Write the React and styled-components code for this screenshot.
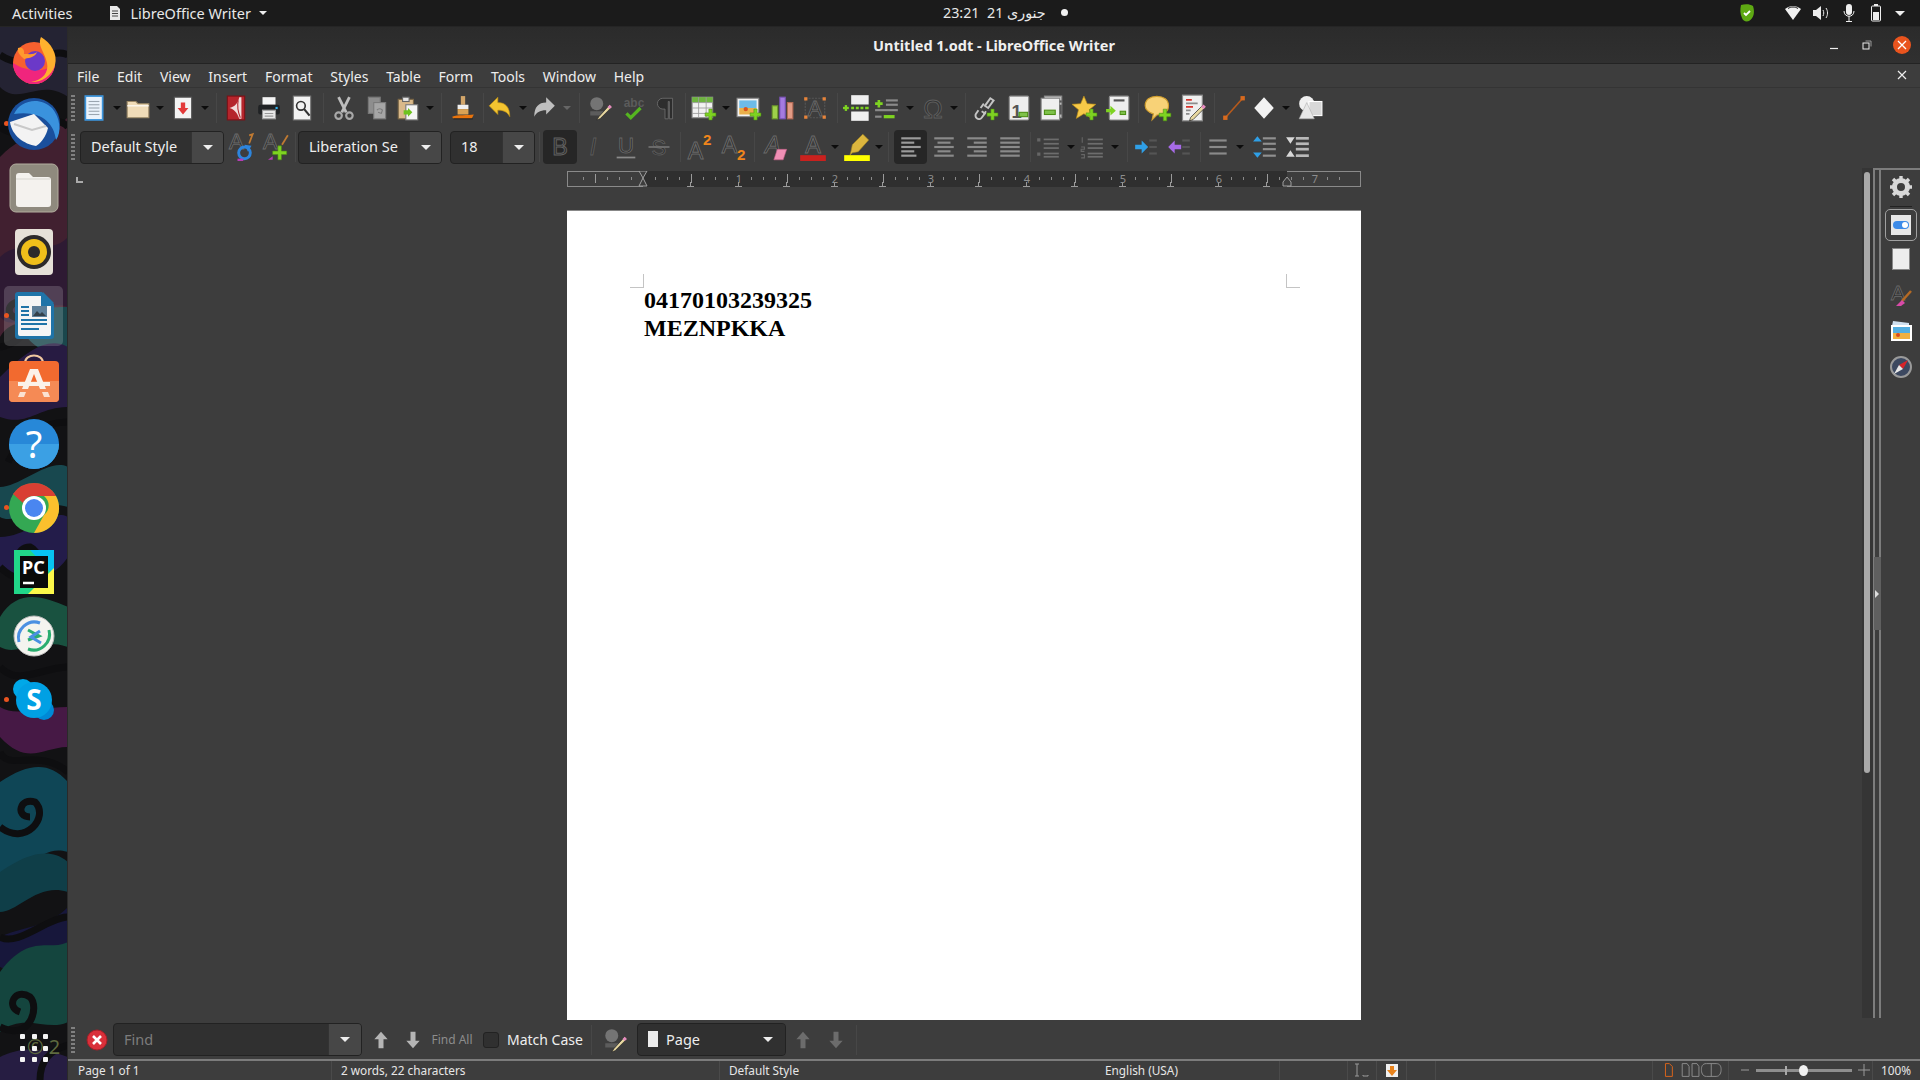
import React from "react";
import styled, { createGlobalStyle } from "styled-components";

const UI_FONT = `"Noto Sans", "DejaVu Sans", sans-serif`;

const GlobalStyle = createGlobalStyle`
  html, body {
    margin: 0;
    padding: 0;
    background: #3d3d3d;
    overflow: hidden;
  }
  * { box-sizing: border-box; }
`;

const Desktop = styled.div`
  width: 1920px;
  height: 1080px;
  display: flex;
  flex-direction: column;
  font-family: ${UI_FONT};
  font-size: 14px;
  color: #f0f0f0;
  overflow: hidden;
`;

/* ---------- gnome top bar ---------- */

const TopBar = styled.div`
  height: 27px;
  flex: none;
  background: #1b1b1b;
  border-bottom: 1px solid #252525;
  position: relative;
  display: flex;
  align-items: center;
  padding-left: 12px;
  font-size: 14.5px;
  color: #e8e8e8;
`;

const AppMenu = styled.div`
  display: flex;
  align-items: center;
  gap: 8px;
  margin-left: 36px;
`;

const DownCaret = styled.span`
  display: inline-block;
  width: 0;
  height: 0;
  border-left: ${(p) => p.$size || 4}px solid transparent;
  border-right: ${(p) => p.$size || 4}px solid transparent;
  border-top: ${(p) => p.$size || 4}px solid ${(p) => p.$color || "#eee"};
`;

const Clock = styled.div`
  position: absolute;
  left: 943px;
  top: 3px;
  display: flex;
  align-items: center;
  gap: 15px;
  font-size: 14.3px;
  white-space: pre;
`;

const Dot = styled.span`
  width: 7px;
  height: 7px;
  border-radius: 50%;
  background: #f2f2f2;
`;

const TrayGroup = styled.div`
  margin-left: auto;
  display: flex;
  align-items: center;
`;

const TraySlot = styled.span`
  width: ${(p) => p.$w}px;
  display: flex;
  justify-content: center;
`;

/* ---------- dock ---------- */

const Body = styled.div`
  flex: 1;
  display: flex;
  min-height: 0;
`;

const Dock = styled.div`
  width: 68px;
  flex: none;
  position: relative;
  background: #121214;
  border-right: 1px solid #2a2a2a;
  overflow: hidden;
  display: flex;
  flex-direction: column;
  padding-top: 1px;
`;

const Wallpaper = styled.svg`
  position: absolute;
  inset: 0;
`;

const DockItem = styled.div`
  position: relative;
  height: 64px;
  display: flex;
  align-items: center;
  justify-content: center;
`;

const DockActive = styled.div`
  position: absolute;
  left: 4px;
  right: 4px;
  top: 2px;
  bottom: 2px;
  border-radius: 5px;
  background: rgba(255, 255, 255, 0.17);
`;

const RunDot = styled.span`
  position: absolute;
  left: 4px;
  top: 50%;
  margin-top: -3px;
  width: 5px;
  height: 5px;
  border-radius: 50%;
  background: #e95420;
`;

const DockIcon = styled.svg`
  position: relative;
  display: block;
`;

const AppsGrid = styled.div`
  position: absolute;
  left: 20px;
  bottom: 18px;
  display: grid;
  grid-template-columns: repeat(3, 5px);
  gap: 6.5px;
`;

const AppsDot = styled.span`
  width: 5px;
  height: 5px;
  border-radius: 1px;
  background: #f4f4f4;
`;

/* ---------- libreoffice window ---------- */

const Win = styled.div`
  flex: 1;
  min-width: 0;
  display: flex;
  flex-direction: column;
  background: #3d3d3d;
`;

const TitleBar = styled.div`
  height: 37px;
  flex: none;
  background: linear-gradient(#2b2b2b, #303030);
  border-bottom: 1px solid #232323;
  position: relative;
  display: flex;
  align-items: center;
  justify-content: center;
  font-weight: 700;
  font-size: 14.5px;
  color: #f0f0f0;
`;

const WinControls = styled.div`
  position: absolute;
  right: 0;
  top: 0;
  height: 100%;
  display: flex;
  align-items: center;
`;

const WinButton = styled.span`
  width: ${(p) => p.$w}px;
  display: flex;
  justify-content: center;
`;

const CloseDisc = styled.span`
  width: 18px;
  height: 18px;
  border-radius: 50%;
  background: #e9541e;
  display: flex;
  align-items: center;
  justify-content: center;
`;

const MenuBar = styled.div`
  height: 24px;
  flex: none;
  display: flex;
  align-items: center;
  padding-top: 1px;
  border-bottom: 1px solid #343434;
  position: relative;
  color: #ededed;
`;

const MenuItem = styled.span`
  padding: 0 8.9px;
  font-size: 14px;
`;

const DocClose = styled.span`
  position: absolute;
  right: 13px;
  top: 6px;
  display: flex;
`;

const ToolRow = styled.div`
  height: ${(p) => p.$h}px;
  flex: none;
  display: flex;
  align-items: center;
  padding-left: 3px;
  padding-top: ${(p) => p.$top || 0}px;
`;

const Grip = styled.span`
  width: 4px;
  height: ${(p) => p.$h || 26}px;
  margin-right: ${(p) => p.$mr || 3}px;
  background: repeating-linear-gradient(#808080 0 2px, transparent 2px 4px);
  flex: none;
`;

const Tool = styled.span`
  width: ${(p) => p.$w}px;
  height: ${(p) => (p.$active ? 34 : 30)}px;
  flex: none;
  display: flex;
  align-items: center;
  justify-content: center;
  border-radius: 4px;
  background: ${(p) => (p.$active ? "#262626" : "transparent")};
`;

const Sep = styled.span`
  width: ${(p) => p.$w}px;
  height: 30px;
  flex: none;
  display: flex;
  justify-content: center;
  &::before {
    content: "";
    width: 1px;
    background: #474747;
  }
`;

const Combo = styled.div`
  width: ${(p) => p.$w}px;
  height: ${(p) => p.$h || 33}px;
  flex: none;
  display: flex;
  border: 1px solid #222;
  border-radius: 4px;
  background: #303030;
  overflow: hidden;
  font-size: 14.5px;
`;

const ComboText = styled.span`
  flex: 1;
  min-width: 0;
  padding-left: ${(p) => p.$pad || 10}px;
  padding-bottom: 2px;
  display: flex;
  align-items: center;
  gap: 8px;
  color: ${(p) => p.$color || "#eeeeee"};
  white-space: nowrap;
  overflow: hidden;
`;

const ComboArrow = styled.span`
  width: ${(p) => p.$w || 32}px;
  flex: none;
  background: ${(p) => (p.$flat ? "#303030" : "#474747")};
  border-left: ${(p) => (p.$flat ? "0" : "1px solid #333")};
  display: flex;
  align-items: center;
  justify-content: center;
`;

const Spacer = styled.span`
  width: ${(p) => p.$w}px;
  flex: none;
`;

/* ---------- document area ---------- */

const Main = styled.div`
  flex: 1;
  min-height: 0;
  display: flex;
`;

const Workspace = styled.div`
  flex: 1;
  min-width: 0;
  display: flex;
  flex-direction: column;
  position: relative;
  padding: 3px 0 0 499px;
  overflow: hidden;
`;

const RulerCorner = styled.span`
  position: absolute;
  left: 8px;
  top: 9px;
  width: 7px;
  height: 6px;
  border-left: 2px solid #aaa;
  border-bottom: 2px solid #aaa;
`;

const RulerSvg = styled.svg`
  display: block;
  flex: none;
`;

const Page = styled.div`
  width: 794px;
  flex: 1;
  margin-top: 23px;
  background: #fff;
  border-top: 1px solid #888;
  position: relative;
  padding: 75px 74px 0 77px;
  font-family: "Liberation Serif", "Times New Roman", serif;
  font-weight: 700;
  font-size: 24px;
  line-height: 28px;
  color: #000;
`;

const MarginMark = styled.span`
  position: absolute;
  top: 63px;
  ${(p) => (p.$right ? "right: 61px;" : "left: 63px;")}
  width: 14px;
  height: 14px;
  border-bottom: 1px solid #c4c4c4;
  ${(p) => (p.$right ? "border-left: 1px solid #c4c4c4;" : "border-right: 1px solid #c4c4c4;")}
`;

const ScrollTrack = styled.div`
  width: 11px;
  flex: none;
  background: #353535;
  padding: 4px 2px 0 2px;
  margin-bottom: 2px;
`;

const ScrollThumb = styled.div`
  width: 6px;
  height: 601px;
  border-radius: 3px;
  background: #a9a9a9;
`;

const SidebarSash = styled.div`
  width: 6px;
  flex: none;
  border-left: 2px solid #7d7d7d;
  border-top: 2px solid #7d7d7d;
  position: relative;
  margin-bottom: 2px;
`;

const SashHandle = styled.span`
  position: absolute;
  left: -1px;
  top: 387px;
  width: 7px;
  height: 73px;
  background: #5f5f5f;
  display: flex;
  align-items: center;
  justify-content: center;
`;

const Sidebar = styled.div`
  width: 41px;
  flex: none;
  border-left: 2px solid #7d7d7d;
  border-top: 2px solid #7d7d7d;
  margin-bottom: 2px;
  display: flex;
  flex-direction: column;
  align-items: center;
`;

const SideTool = styled.span`
  width: 32px;
  height: ${(p) => p.$h || 36}px;
  flex: none;
  display: flex;
  align-items: center;
  justify-content: center;
  border-radius: 5px;
  border: 1px solid ${(p) => (p.$active ? "#a0a0a0" : "transparent")};
`;

const SideDivider = styled.span`
  width: 22px;
  height: 1px;
  background: #222;
  margin: 2px 0;
`;

/* ---------- find bar + status bar ---------- */

const FindLabel = styled.span`
  width: ${(p) => p.$w}px;
  flex: none;
  text-align: center;
  font-size: 12px;
  color: #8c8c8c;
`;

const CheckBox = styled.span`
  width: 16px;
  height: 16px;
  flex: none;
  margin: 0 8px 0 5px;
  background: #303030;
  border: 1px solid #222;
  border-radius: 3px;
`;

const MatchCase = styled.span`
  width: 84px;
  flex: none;
  padding-bottom: 1px;
  white-space: nowrap;
  color: #eee;
`;

const StatusBar = styled.div`
  height: 21px;
  flex: none;
  border-top: 2px solid #7c7c7c;
  display: flex;
  align-items: center;
  font-size: 11.8px;
  color: #e6e6e6;
`;

const StatusCell = styled.div`
  width: ${(p) => p.$w}px;
  flex: none;
  height: 100%;
  padding-left: ${(p) => (p.$center ? 0 : p.$pad ?? 9)}px;
  padding-bottom: 1px;
  display: flex;
  align-items: center;
  justify-content: ${(p) => (p.$center ? "center" : "flex-start")};
  gap: 4px;
  white-space: nowrap;
  border-left: 1px solid ${(p) => (p.$plain ? "transparent" : "#4a4a4a")};
`;

const ZoomTrack = styled.span`
  width: 96px;
  height: 3px;
  background: #8e8e8e;
  position: relative;
  display: block;
  margin: 0 2px;
`;

const ZoomMark = styled.span`
  position: absolute;
  left: 29px;
  top: -3px;
  width: 2px;
  height: 9px;
  background: #a8a8a8;
`;

const ZoomThumb = styled.span`
  position: absolute;
  left: 43px;
  top: -4px;
  width: 9px;
  height: 11px;
  border-radius: 50%;
  background: #f0f0f0;
`;

/* ---------- drawings ---------- */

const Ico = ({ s = 24, children }) => (
  <svg width={s} height={s} viewBox="0 0 24 24" style={{ display: "block", overflow: "visible" }}>
    {children}
  </svg>
);

const Plus = ({ x = 16, y = 16, r = 5 }) => (
  <path
    d={`M${x - r} ${y - 1.5}h${r - 1.5}v-${r - 1.5}h3v${r - 1.5}h${r - 1.5}v3h-${r - 1.5}v${r - 1.5}h-3v-${r - 1.5}h-${r - 1.5}z`}
    fill="#7ed321"
    stroke="#4d8f14"
    strokeWidth="0.5"
  />
);

const Letter = ({ x = 9, y = 18, size = 20, fill = "#2c2c2c", stroke = "#6a6a6a", weight = 400, style, ch = "A" }) => (
  <text
    x={x}
    y={y}
    textAnchor="middle"
    fontFamily="Liberation Sans, sans-serif"
    fontSize={size}
    fontWeight={weight}
    fontStyle={style}
    fill={fill}
    stroke={stroke}
    strokeWidth="0.8"
  >
    {ch}
  </text>
);

const Lines = ({ x = 3, w = 18, ys, c = "#888", sw = 2 }) => (
  <g stroke={c} strokeWidth={sw}>
    {ys.map((y, i) => (
      <path key={i} d={`M${x} ${y}h${Array.isArray(w) ? w[i] : w}`} />
    ))}
  </g>
);

const Icons = {
  newDoc: (
    <Ico s={26}>
      <rect x="4" y="1" width="16" height="22" fill="#eaf2fb" stroke="#3d95dc" strokeWidth="1.6" />
      <Lines x={7} w={10} ys={[6, 9, 12, 15, 18]} c="#9aa5b0" sw={1} />
    </Ico>
  ),
  open: (
    <Ico s={26}>
      <path d="M2 6h8l2 2h10v13H2z" fill="#f0dcb8" stroke="#9d8a68" />
      <path d="M2 10h20" stroke="#fff" />
    </Ico>
  ),
  save: (
    <Ico s={26}>
      <rect x="4" y="2" width="16" height="20" fill="#f4f4f4" stroke="#555" />
      <path d="M10 7h4v5h3l-5 6-5-6h3z" fill="#e33a3a" />
    </Ico>
  ),
  pdf: (
    <Ico s={26}>
      <rect x="4" y="1" width="16" height="22" fill="#b5252c" stroke="#7c1116" />
      <path d="M15 2c-1 6-5 9-9 10 4 1 7 4 9 10h2V2z" fill="#f2dcdc" />
      <path d="M14 5c-1 5 0 11 2 16" stroke="#b5252c" fill="none" />
    </Ico>
  ),
  print: (
    <Ico s={26}>
      <rect x="6" y="2" width="12" height="7" fill="#f4f4f4" />
      <rect x="2" y="9" width="20" height="9" rx="2" fill="#202224" />
      <rect x="18" y="11" width="2" height="2" fill="#35b4f0" />
      <rect x="6" y="14" width="12" height="8" fill="#e9e9e9" stroke="#999" />
      <path d="M8 17h8M8 19.500h8" stroke="#999" />
    </Ico>
  ),
  preview: (
    <Ico s={26}>
      <rect x="4" y="1" width="16" height="22" fill="#f2f2f2" stroke="#777" />
      <circle cx="11" cy="10" r="4" fill="none" stroke="#333" strokeWidth="1.5" />
      <path d="M14 13l5 6" stroke="#333" strokeWidth="2" />
    </Ico>
  ),
  cut: (
    <Ico s={26}>
      <path d="M7 2l7 14M17 2l-7 14" stroke="#bdbdbd" strokeWidth="2.6" />
      <circle cx="7" cy="19" r="3" fill="none" stroke="#a8a8a8" strokeWidth="2" />
      <circle cx="17" cy="19" r="3" fill="none" stroke="#a8a8a8" strokeWidth="2" />
    </Ico>
  ),
  copy: (
    <Ico s={26}>
      <rect x="4" y="2" width="11" height="15" fill="#8e8e8e" stroke="#777" />
      <rect x="9" y="7" width="11" height="15" fill="#a5a5a5" stroke="#7a7a7a" />
      <path d="M12 14a3 3 0 0 1 5 0l-1 3-3-1" fill="none" stroke="#7a7a7a" />
    </Ico>
  ),
  paste: (
    <Ico s={26}>
      <rect x="3" y="4" width="14" height="18" fill="#d9b98a" stroke="#7a6645" />
      <rect x="7" y="2" width="6" height="4" fill="#e5e5e5" stroke="#666" />
      <rect x="10" y="9" width="11" height="14" fill="#f5f5f5" stroke="#777" />
      <path d="M8 14h4v-2l4 4-4 4v-2H8z" fill="#6ec31e" />
    </Ico>
  ),
  clone: (
    <Ico s={26}>
      <rect x="10" y="1" width="4" height="8" fill="#d3a66a" />
      <rect x="7" y="9" width="10" height="4" fill="#f0f0f0" />
      <path d="M7 13h10v5H7z" fill="#d9a255" />
      <path d="M2 20c5-2 14-1 20-2l-2 4H3z" fill="#e8730c" />
      <path d="M3 22h18" stroke="#222" strokeWidth="1" />
    </Ico>
  ),
  undo: (
    <Ico s={26}>
      <path d="M2 10l8-8v5c7 0 11 4 11 13-2-4-5-6-11-6v4z" fill="#f4c430" stroke="#b98d15" strokeWidth="0.6" />
    </Ico>
  ),
  redo: (
    <Ico s={26}>
      <path d="M22 10l-8-8v5C7 7 3 11 3 20c2-4 5-6 11-6v4z" fill="#bfbfbf" />
    </Ico>
  ),
  spell: (
    <Ico s={26}>
      <circle cx="9" cy="8" r="6" fill="#747474" />
      <path d="M3 15h12l2 2-4 2H3z" fill="#5c5c5c" />
      <path d="M21 9L11 20l-2 3 3-1L23 11z" fill="#e8d8a0" stroke="#222" strokeWidth="0.6" />
      <path d="M21 9l2 2-2 2-2-2z" fill="#e58ac0" />
    </Ico>
  ),
  autoSpell: (
    <Ico s={26}>
      <text x="12" y="11" textAnchor="middle" fontFamily="Liberation Sans, sans-serif" fontSize="11" fontWeight="700" fill="#5b5b5b">
        abc
      </text>
      <path d="M5 17l4 4 9-9" fill="none" stroke="#55b520" strokeWidth="3" />
    </Ico>
  ),
  pilcrow: (
    <Ico s={26}>
      <path d="M19 3H10a5 5 0 0 0 0 10h2v9h3V6h1v16h3z" fill="#2d2d2d" stroke="#6d6d6d" strokeWidth="0.8" />
    </Ico>
  ),
  table: (
    <Ico s={26}>
      <rect x="1" y="2" width="19" height="19" fill="#f2f2f2" stroke="#8a8a8a" />
      <rect x="1" y="2" width="19" height="5" fill="#6db33f" />
      <path d="M7 2v19M14 2v19M1 7h19M1 12h19M1 17h19" stroke="#9c9c9c" strokeWidth="0.8" />
      <Plus x={18} y={18} />
    </Ico>
  ),
  image: (
    <Ico s={26}>
      <rect x="1" y="3" width="20" height="17" fill="#f2f2f2" stroke="#888" />
      <rect x="3" y="5" width="16" height="7" fill="#6dbbe8" />
      <rect x="3" y="12" width="16" height="6" fill="#eab04a" />
      <circle cx="9" cy="13" r="2" fill="#d8541e" />
      <Plus x={18} y={18} />
    </Ico>
  ),
  chart: (
    <Ico s={26}>
      <rect x="3" y="10" width="5" height="12" fill="#9ed04a" stroke="#6d9c2b" />
      <rect x="10" y="2" width="5" height="20" fill="#a57be0" stroke="#7a52b8" />
      <rect x="17" y="7" width="5" height="15" fill="#e29b85" stroke="#b46a55" />
    </Ico>
  ),
  textBox: (
    <Ico s={26}>
      <rect x="3" y="3" width="18" height="18" fill="none" stroke="#555" strokeDasharray="2 1" />
      <Letter x={12} y={19} size={20} />
      <path d="M2 2h3v3H2zM19 2h3v3h-3zM2 19h3v3H2zM19 19h3v3h-3z" fill="#e8843a" />
    </Ico>
  ),
  pageBreak: (
    <Ico s={28}>
      <rect x="7" y="1" width="15" height="8" fill="#efefef" />
      <rect x="7" y="15" width="15" height="8" fill="#efefef" />
      <path d="M0 12h5" stroke="#7ed321" strokeWidth="2" />
      <path d="M2.500 9.500v5" stroke="#7ed321" strokeWidth="2" />
      <path d="M7 12h2.500M11 12h2.500M15 12h2.500M19 12h3" stroke="#7ed321" strokeWidth="2" />
    </Ico>
  ),
  field: (
    <Ico s={26}>
      <path d="M1 8h7M4.500 4.500v7" stroke="#7ed321" strokeWidth="2.400" />
      <Lines x={11} w={11} ys={[5, 9]} c="#8a8a8a" />
      <Lines x={1} w={21} ys={[14]} c="#8a8a8a" />
      <path d="M1 20h6" stroke="#8a8a8a" strokeWidth="2" />
      <path d="M9 20h10" stroke="#7ed321" strokeWidth="3" />
    </Ico>
  ),
  omega: (
    <Ico s={26}>
      <text x="12" y="21" textAnchor="middle" fontFamily="Liberation Sans, sans-serif" fontSize="24" fill="#333" stroke="#5f5f5f" strokeWidth="0.8">
        Ω
      </text>
    </Ico>
  ),
  link: (
    <Ico s={26}>
      <path d="M16 3l-5 7 3 2 5-7zM5 14l-2 3a3 3 0 0 0 5 4l3-4-3-2" fill="none" stroke="#c4c4c4" strokeWidth="1.800" />
      <path d="M7 12l3-4M12 15l-2 3" stroke="#c4c4c4" strokeWidth="1.800" />
      <Plus x={18} y={18} />
    </Ico>
  ),
  footnote: (
    <Ico s={26}>
      <rect x="3" y="1" width="18" height="22" rx="1" fill="#eeeeee" stroke="#8a8a8a" />
      <text x="5" y="21" fontFamily="Liberation Sans, sans-serif" fontSize="17" fontWeight="700" fill="#555">
        1
      </text>
      <rect x="12" y="16" width="8" height="4" fill="#7ec24a" stroke="#4d8f14" />
    </Ico>
  ),
  endnote: (
    <Ico s={26}>
      <rect x="5" y="1" width="16" height="20" fill="#bfbfbf" stroke="#8a8a8a" />
      <rect x="2" y="3" width="17" height="20" fill="#efefef" stroke="#8a8a8a" />
      <rect x="5" y="14" width="10" height="4" fill="#7ec24a" stroke="#4d8f14" />
      <path d="M20 9v9" stroke="#555" strokeWidth="2" />
      <path d="M20 5v2" stroke="#555" strokeWidth="2" />
    </Ico>
  ),
  bookmark: (
    <Ico s={26}>
      <path d="M11 1l3 7 8 .6-6 5 2 8-7-4.300-7 4.300 2-8-6-5 8-.6z" fill="#f7c948" stroke="#b98d15" strokeWidth="0.6" />
      <Plus x={18} y={18} />
    </Ico>
  ),
  xref: (
    <Ico s={26}>
      <rect x="4" y="1" width="18" height="22" rx="1" fill="#efefef" stroke="#8a8a8a" />
      <path d="M8 5h10" stroke="#555" strokeWidth="2" />
      <rect x="14" y="15" width="5" height="3" fill="#7ec24a" stroke="#4d8f14" />
      <path d="M1 13h4v-3l5 4.500-5 4.500v-3H1z" fill="#7ed321" />
    </Ico>
  ),
  comment: (
    <Ico s={28}>
      <path d="M11 2c6 0 10 3 10 8s-4 8-10 8l-4 4 1-5c-4-1-7-4-7-7 0-5 4-8 10-8z" fill="#f8d277" stroke="#cf9d2e" />
      <Plus x={18} y={18} />
    </Ico>
  ),
  track: (
    <Ico s={28}>
      <rect x="3" y="1" width="17" height="22" fill="#efefef" stroke="#8a8a8a" />
      <path d="M6 5h5M6 11h6" stroke="#d8342c" strokeWidth="1.400" />
      <path d="M6 8h10M6 14h4M6 17h3" stroke="#8c8c8c" strokeWidth="1.400" />
      <path d="M21 9L10 20l-1 3 3-1L23 11z" fill="#e8d8a0" stroke="#222" strokeWidth="0.6" />
      <path d="M21 9l2 2-2 2-2-2z" fill="#e58ac0" />
    </Ico>
  ),
  line: (
    <Ico s={26}>
      <path d="M4 21L20 3" stroke="#b65a1c" strokeWidth="1.500" />
      <rect x="2" y="19" width="4" height="4" fill="#d86a1e" />
      <rect x="18" y="1" width="4" height="4" fill="#d86a1e" />
    </Ico>
  ),
  diamond: (
    <Ico s={26}>
      <path d="M12 2l9 10-9 10-9-10z" fill="#f2f2f2" />
    </Ico>
  ),
  shapes: (
    <Ico s={26}>
      <circle cx="9" cy="8" r="7" fill="#f0f0f0" />
      <rect x="11" y="6" width="12" height="13" fill="#d8d8d8" stroke="#fff" />
      <path d="M9 7l7 15H2z" fill="#e8e8e8" stroke="#aaa" strokeWidth="0.5" />
    </Ico>
  ),
  updateStyle: (
    <Ico s={28}>
      <Letter x={8} y={14} size={19} />
      <circle cx="15" cy="17" r="5" fill="none" stroke="#2d85dd" strokeWidth="2.500" />
      <path d="M15 10l6 1-3 5z" fill="#2d85dd" />
      <path d="M9 23h5" stroke="#b43fb4" strokeWidth="2" />
      <path d="M19 2l3-1-3 8" stroke="#c07a32" strokeWidth="1.500" fill="none" />
    </Ico>
  ),
  newStyle: (
    <Ico s={28}>
      <Letter x={8} y={14} size={19} />
      <path d="M23 2l-5 8" stroke="#c07a32" strokeWidth="1.500" />
      <path d="M6 23l4-3v3z" fill="#b43fb4" />
      <Plus x={16} y={17} r={6} />
    </Ico>
  ),
  bold: (
    <Ico s={28}>
      <Letter x={12} y={19} size={20} stroke="#616161" ch="B" />
    </Ico>
  ),
  italic: (
    <Ico s={28}>
      <Letter x={12} y={19} size={20} style="italic" stroke="#5a5a5a" ch="I" fill="#333" />
    </Ico>
  ),
  underline: (
    <Ico s={28}>
      <Letter x={12} y={17} size={19} stroke="#666" ch="U" />
      <path d="M4 21h16" stroke="#8a8a8a" strokeWidth="1.500" />
    </Ico>
  ),
  strike: (
    <Ico s={28}>
      <Letter x={12} y={19} size={19} stroke="#5c5c5c" ch="S" />
      <path d="M3 12h18" stroke="#707070" strokeWidth="1.500" />
    </Ico>
  ),
  sup: (
    <Ico s={28}>
      <Letter x={9} y={22} size={20} />
      <text x="19" y="10" textAnchor="middle" fontFamily="Liberation Sans, sans-serif" fontSize="13" fontWeight="700" fill="#f0851c">
        2
      </text>
    </Ico>
  ),
  sub: (
    <Ico s={28}>
      <Letter x={9} y={17} size={20} />
      <text x="19" y="23" textAnchor="middle" fontFamily="Liberation Sans, sans-serif" fontSize="13" fontWeight="700" fill="#f0851c">
        2
      </text>
    </Ico>
  ),
  clear: (
    <Ico s={28}>
      <Letter x={10} y={17} size={20} style="italic" />
      <path d="M14 14h8l-3 9h-8z" fill="#ef8fb5" stroke="#c55d87" strokeWidth="0.5" />
    </Ico>
  ),
  fontColor: (
    <Ico s={28}>
      <Letter x={12} y={17} size={20} />
      <rect x="1" y="19" width="22" height="5" fill="#c9211e" />
    </Ico>
  ),
  highlight: (
    <Ico s={28}>
      <path d="M17 1l5 5-9 10-5 1-2 2 1-4 1-5z" fill="#dcb63e" stroke="#a98920" strokeWidth="0.5" />
      <rect x="1" y="19" width="22" height="5" fill="#ffff00" />
    </Ico>
  ),
  alignLeft: (
    <Ico s={26}>
      <Lines ys={[4, 8, 12, 16, 20]} w={[18, 12, 18, 12, 14]} c="#9b9b9b" />
    </Ico>
  ),
  alignCenter: (
    <Ico s={26}>
      <Lines ys={[4, 12, 20]} c="#8a8a8a" />
      <Lines x={6} w={12} ys={[8, 16]} c="#8a8a8a" />
    </Ico>
  ),
  alignRight: (
    <Ico s={26}>
      <Lines ys={[4, 12, 20]} c="#8a8a8a" />
      <Lines x={9} w={12} ys={[8, 16]} c="#8a8a8a" />
    </Ico>
  ),
  justify: (
    <Ico s={26}>
      <Lines ys={[4, 8, 12, 16, 20]} c="#8a8a8a" />
    </Ico>
  ),
  bullets: (
    <Ico s={26}>
      <path d="M2 4h3v3H2zM2 17h3v3H2z" fill="#666" />
      <Lines x={8} w={14} ys={[5, 9, 13, 18, 21]} c="#6d6d6d" sw={1.6} />
    </Ico>
  ),
  numbers: (
    <Ico s={26}>
      <path d="M3 3v5M2 12h3v2H2v2h3M2 19h3v3H2" stroke="#666" strokeWidth="1" fill="none" />
      <Lines x={8} w={14} ys={[5, 9, 13, 18, 21]} c="#6d6d6d" sw={1.6} />
    </Ico>
  ),
  indent: (
    <Ico s={26}>
      <path d="M2 10h6V6l6 6-6 6v-4H2z" fill="#2f9fe6" />
      <Lines x={15} w={7} ys={[6, 12, 18]} c="#555" />
    </Ico>
  ),
  outdent: (
    <Ico s={26}>
      <path d="M14 10H8V6l-6 6 6 6v-4h6z" fill="#a76be8" />
      <Lines x={15} w={7} ys={[6, 12, 18]} c="#555" />
    </Ico>
  ),
  spacing: (
    <Ico s={26}>
      <Lines x={4} w={16} ys={[6, 12, 18]} c="#8a8a8a" />
    </Ico>
  ),
  spaceInc: (
    <Ico s={26}>
      <path d="M5 2l4 5H1zM5 22l4-5H1z" fill="#2f9fe6" />
      <Lines x={10} w={12} ys={[4, 9, 14, 20]} c="#909090" />
    </Ico>
  ),
  spaceDec: (
    <Ico s={26}>
      <path d="M1 3h8L5 9zM1 21h8l-4-6z" fill="#d8d8d8" />
      <Lines x={10} w={12} ys={[4, 9, 14, 20]} c="#b8b8b8" sw={2.5} />
    </Ico>
  ),
  up: (c) => (
    <Ico s={20}>
      <path d="M12 2l8 9h-5v11H9V11H4z" fill={c} />
    </Ico>
  ),
  down: (c) => (
    <Ico s={20}>
      <path d="M12 22l8-9h-5V2H9v11H4z" fill={c} />
    </Ico>
  ),
};

const ToolbarOne = [
  { w: 32, i: "newDoc" }, { w: 14, dd: 1 }, { w: 28, i: "open" }, { w: 16, dd: 1 }, { w: 30, i: "save" }, { w: 14, dd: 1 },
  { sep: 8 }, { w: 32, i: "pdf" }, { w: 34, i: "print" }, { w: 32, i: "preview" }, { sep: 10 }, { w: 32, i: "cut" },
  { w: 34, i: "copy" }, { w: 28, i: "paste" }, { w: 16, dd: 1 }, { sep: 6 }, { w: 38, i: "clone" }, { sep: 2 },
  { w: 32, i: "undo" }, { w: 14, dd: 1 }, { w: 28, i: "redo" }, { w: 18, dd: 1, dim: 1 }, { sep: 6 }, { w: 36, i: "spell" },
  { w: 32, i: "autoSpell" }, { w: 30, i: "pilcrow" }, { sep: 10 }, { w: 28, i: "table" }, { w: 16, dd: 1 }, { w: 30, i: "image" },
  { w: 36, i: "chart" }, { w: 30, i: "textBox" }, { sep: 14 }, { w: 26, i: "pageBreak" }, { w: 34, i: "field" }, { w: 12, dd: 1 },
  { w: 34, i: "omega" }, { w: 8, dd: 1 }, { sep: 14 }, { w: 28, i: "link" }, { w: 38, i: "footnote" }, { w: 28, i: "endnote" },
  { w: 38, i: "bookmark" }, { w: 28, i: "xref" }, { sep: 12 }, { w: 28, i: "comment" }, { w: 42, i: "track" }, { sep: 1 },
  { w: 37, i: "line" }, { w: 24, i: "diamond" }, { w: 20, dd: 1 }, { w: 28, i: "shapes" },
];

const ToolbarTwoEnd = [
  { w: 34, i: "bold", active: 1 }, { w: 32, i: "italic" }, { w: 34, i: "underline" }, { w: 32, i: "strike" }, { sep: 10 },
  { w: 28, i: "sup" }, { w: 40, i: "sub" }, { sep: 2 }, { w: 40, i: "clear" }, { w: 36, i: "fontColor" }, { w: 8, dd: 1 },
  { w: 36, i: "highlight" }, { w: 8, dd: 1 }, { sep: 11 }, { w: 33, i: "alignLeft", active: 1 }, { w: 34, i: "alignCenter" },
  { w: 32, i: "alignRight" }, { w: 34, i: "justify" }, { sep: 6 }, { w: 30, i: "bullets" }, { w: 16, dd: 1 }, { w: 26, i: "numbers" },
  { w: 20, dd: 1 }, { sep: 4 }, { w: 34, i: "indent" }, { w: 32, i: "outdent" }, { sep: 10 }, { w: 26, i: "spacing" }, { w: 18, dd: 1 },
  { w: 32, i: "spaceInc" }, { w: 34, i: "spaceDec" },
];

const renderTools = (items) =>
  items.map((t, n) => {
    if (t.sep) return <Sep key={n} $w={t.sep} />;
    if (t.dd)
      return (
        <Tool key={n} $w={t.w}>
          <DownCaret $size={4} $color={t.dim ? "#666" : "#0c0c0c"} />
        </Tool>
      );
    return (
      <Tool key={n} $w={t.w} $active={t.active}>
        {Icons[t.i]}
      </Tool>
    );
  });

// ruler: 96px per inch, marks every 1/8in
function Ruler() {
  const zero = 76;
  const ticks = [];
  for (let i = -5; i <= 58; i++) {
    const x = zero + i * 12;
    if (i === 0 || i % 8 === 0 || x < 4 || x > 790) continue;
    const half = i % 4 === 0;
    ticks.push(<path key={i} d={`M${x + 0.5} ${half ? 3 : 6}v${half ? 9 : 3}`} stroke={half ? "#9a9a9a" : "#8a8a8a"} />);
  }
  const tabs = [];
  for (let i = 1; i <= 13; i++) {
    const x = zero + i * 48 - 1;
    tabs.push(<path key={i} d={`M${x - 3} 15.500h7M${x + 0.5} 11v5`} stroke="#9a9a9a" />);
  }
  return (
    <RulerSvg width="794" height="16" viewBox="0 0 794 16">
      <rect x="0.500" y="0.500" width="793" height="15" fill="none" stroke="#8a8a8a" />
      <rect x="76" y="0" width="644" height="16" fill="#2f2f2f" />
      {ticks}
      {tabs}
      {[1, 2, 3, 4, 5, 6, 7].map((n) => (
        <text key={n} x={zero + n * 96} y="12" textAnchor="middle" fontFamily="Noto Sans, sans-serif" fontSize="11" fill="#8d8d8d">
          {n}
        </text>
      ))}
      <path d="M72 0h8l-4 7 4 8h-8l4-8z" fill="#3d3d3d" stroke="#a0a0a0" />
      <path d="M716 15h8v-4l-4-5-4 5z" fill="#3d3d3d" stroke="#a0a0a0" />
    </RulerSvg>
  );
}

function Backdrop() {
  return (
    <Wallpaper width="68" height="1053" viewBox="0 0 68 1053">
      <rect width="68" height="1053" fill="#121214" />
      <g opacity="0.72">
        <path d="M0 0h68v70C40 50 20 80 0 60z" fill="#2c2a3f" />
        <path d="M0 130c30-30 50-20 68-40v210c-20 10-50-20-68 10z" fill="#54263c" />
        <path d="M0 230c20-20 50 0 68-20v70c-30-10-50 30-68 10z" fill="#3a1e3f" />
        <path d="M20 300c20-20 30-20 48-20v50c-20-10-30 0-48-30z" fill="#1e5c63" />
        <path d="M0 350c30-30 50-40 68-30v60c-30 0-40 20-68 10z" fill="#301f55" />
        <path d="M0 460c20 0 50-30 68-20v40c-30-10-50 20-68 10z" fill="#1b5d66" />
        <path d="M0 510c30 0 50-30 68-20v40c-20 30-50 20-68 10z" fill="#2a2060" />
        <path d="M0 590c18-30 45-20 68-10v40c-30-10-50 10-68 0z" fill="#1c6b52" />
        <path d="M0 680c15 10 40 0 68 0v40c-25 0-40 20-68-10z" fill="#5a1d58" />
        <path d="M0 755c30-20 50-20 68 0v70c-30-10-45 30-68 20z" fill="#0f5a70" />
        <path d="M0 845c15-10 45-30 68-10v30c-30-10-50 20-68 20z" fill="#0e4f5c" />
        <path d="M0 910c20-10 50-10 68-30v50c-30 0-50 20-68 10z" fill="#1a1a4a" />
        <path d="M0 945c30-40 50-20 68-30v80c-20 10-45-10-68 10z" fill="#15594f" />
        <path d="M0 1030c20-10 40-10 68 0v23H0z" fill="#2f2255" />
      </g>
      <g fill="none" stroke="#0e0e10" strokeWidth="7">
        <path d="M0 28c30 20 50-10 68 0" />
        <path d="M0 100c25 20 50-20 68 0" />
        <path d="M0 320c30-5 40-40 20-45-15 0-15 20 5 15" />
        <path d="M68 395c-30 0-50 20-60 40" />
        <path d="M0 540c30 30 50-10 30-20-15 0-15 20 0 15" />
        <path d="M68 640c-25 0-50 20-68 0" />
        <path d="M68 745c-30-25-60 0-68-20" />
        <path d="M0 800c25 20 50-10 35-25-15-5-20 15-5 15" />
        <path d="M68 890c-20 0-50 30-68 20" />
        <path d="M0 1000c30 15 40-20 30-30-15-10-25 10-10 15" />
        <path d="M40 1053c0-20 10-30 28-35" />
      </g>
      <text x="27" y="1027" fontFamily="Noto Sans, sans-serif" fontSize="20" fill="#5e6a3f">
        © 2
      </text>
    </Wallpaper>
  );
}

const DockApps = [
  {
    s: 52,
    art: (
      <>
        <circle cx="26" cy="29" r="21" fill="#f7602f" />
        <path d="M5 29a21 21 0 0 0 42 0c0 4-20 14-42 0z" fill="#f0257d" />
        <path d="M33 3c10 6 17 17 14 28-3 12-16 18-24 17 12-2 18-10 16-19-2-11-10-17-6-26z" fill="#ffb12e" />
        <circle cx="27" cy="27" r="10" fill="#6b39c8" />
        <path d="M10 14c4-2 7 2 6 6 5 0 10 1 13-2-2 6-10 6-13 7-3-3-7-6-6-11z" fill="#ff9a2e" />
      </>
    ),
  },
  {
    dot: true,
    s: 56,
    art: (
      <>
        <circle cx="28" cy="28" r="26" fill="#1a4f9c" />
        <path d="M8 18C14 4 34 0 46 12c8 9 10 24 4 32-2-18-16-30-42-26z" fill="#3a92dd" />
        <path d="M4 26l24-8 14 14c-2 8-6 14-12 18-12-2-24-10-26-24z" fill="#f3f3f3" />
        <path d="M8 28l18 6 14-4" fill="none" stroke="#c9c9c9" strokeWidth="2" />
      </>
    ),
  },
  {
    s: 52,
    art: (
      <>
        <rect x="2" y="2" width="48" height="48" rx="6" fill="#8f8a7e" stroke="#b3ae9f" />
        <path d="M8 14a3 3 0 0 1 3-3h10l4 4h15a3 3 0 0 1 3 3v24a3 3 0 0 1-3 3H11a3 3 0 0 1-3-3z" fill="#f4f2ee" />
        <path d="M8 17h34" stroke="#d8d6d0" />
      </>
    ),
  },
  {
    s: 52,
    art: (
      <>
        <rect x="7" y="3" width="38" height="46" rx="4" fill="#e6e1d8" />
        <circle cx="26" cy="26" r="17" fill="#2d2a2a" />
        <circle cx="26" cy="26" r="13" fill="#f0bf1a" />
        <circle cx="26" cy="26" r="6" fill="#2d2a2a" />
      </>
    ),
  },
  {
    dot: true,
    active: true,
    s: 52,
    art: (
      <>
        <path d="M7 5a3 3 0 0 1 3-3h24l12 12v32a3 3 0 0 1-3 3H10a3 3 0 0 1-3-3z" fill="#1f74a8" />
        <path d="M10 6h23v10h10v28a2 2 0 0 1-2 2H12a2 2 0 0 1-2-2z" fill="#f5f5f5" />
        <path d="M35 2l11 11h-11z" fill="#1f74a8" />
        <path d="M13 17h8M13 21h8M13 25h8M13 30h26M13 34h26M13 39h18" stroke="#1f74a8" strokeWidth="2" />
        <rect x="24" y="16" width="15" height="11" fill="#5d7f99" />
        <path d="M25 26l4-5 3 3 2-2 4 4z" fill="#33404a" />
      </>
    ),
  },
  {
    s: 56,
    art: (
      <>
        <path d="M19 11c0-10 18-10 18 0" fill="none" stroke="#f0c8a0" strokeWidth="2" />
        <rect x="3" y="9" width="50" height="41" rx="4" fill="#f26a2f" />
        <path d="M3 29h50v17a4 4 0 0 1-4 4H7a4 4 0 0 1-4-4z" fill="#f58a55" />
        <path d="M24 17h8l8 20h-6l-6-15-6 15h-6z" fill="#fbf2ea" />
        <path d="M12 30h32v4H12z" fill="#fbf2ea" />
        <path d="M14 40l-2 5h6l2-5zM42 40l2 5h-6l-2-5z" fill="#fbe2d2" />
      </>
    ),
  },
  {
    s: 56,
    art: (
      <>
        <circle cx="28" cy="28" r="25" fill="#2788d8" />
        <path d="M3 28a25 25 0 0 0 50 0z" fill="#3ba0e4" />
        <text x="28" y="42" textAnchor="middle" fontFamily="Noto Sans, sans-serif" fontSize="38" fill="#fff">
          ?
        </text>
      </>
    ),
  },
  {
    dot: true,
    s: 56,
    art: (
      <>
        <circle cx="28" cy="28" r="25" fill="#34a853" />
        <path d="M28 3a25 25 0 0 1 22 13H28a12 12 0 0 0-11 7L7 14A25 25 0 0 1 28 3z" fill="#d93f33" />
        <path d="M50 16a25 25 0 0 1-22 37l10-18a12 12 0 0 0 0-19z" fill="#fbc02d" />
        <circle cx="28" cy="28" r="12" fill="#fff" />
        <circle cx="28" cy="28" r="9" fill="#4a86f0" />
      </>
    ),
  },
  {
    s: 52,
    art: (
      <>
        <path d="M6 4h40v44H6z" fill="#21d789" />
        <path d="M22 4h24v26z" fill="#07c3f2" />
        <path d="M46 22v26H20z" fill="#fcf84a" />
        <rect x="12" y="10" width="28" height="32" fill="#0a0a0a" />
        <text x="14" y="28" fontFamily="Noto Sans, sans-serif" fontSize="18" fontWeight="700" fill="#fff">
          PC
        </text>
        <path d="M15 37h11" stroke="#fff" strokeWidth="2.500" />
      </>
    ),
  },
  {
    s: 52,
    art: (
      <>
        <circle cx="26" cy="26" r="20" fill="#f4f4ef" stroke="#bbb" />
        <path d="M11 32a16 16 0 0 1 21-19" fill="none" stroke="#4a90e2" strokeWidth="3" />
        <path d="M41 20a16 16 0 0 1-21 19" fill="none" stroke="#29ad6f" strokeWidth="3" />
        <path d="M20 20l11 6-11 4" fill="none" stroke="#29ad6f" strokeWidth="3" />
        <path d="M33 33l-10-6 9-6" fill="none" stroke="#4a90e2" strokeWidth="3" />
      </>
    ),
  },
  {
    dot: true,
    s: 52,
    art: (
      <>
        <circle cx="15" cy="15" r="10" fill="#00a8e8" />
        <circle cx="36" cy="36" r="10" fill="#0089d6" />
        <circle cx="26" cy="26" r="18" fill="#00a0e4" />
        <text x="26" y="36" textAnchor="middle" fontFamily="Noto Sans, sans-serif" fontSize="28" fontWeight="700" fill="#fff">
          S
        </text>
      </>
    ),
  },
];

const Menus = ["File", "Edit", "View", "Insert", "Format", "Styles", "Table", "Form", "Tools", "Window", "Help"];

export default function App() {
  return (
    <Desktop>
      <GlobalStyle />
      <TopBar>
        Activities
        <AppMenu>
          <svg width="14" height="16" viewBox="0 0 14 16">
            <path d="M2 1h7l3 3v11H2z" fill="#e8e8e8" />
            <path d="M4 6h6M4 8.500h6M4 11h6" stroke="#444" />
          </svg>
          LibreOffice Writer
          <DownCaret />
        </AppMenu>
        <Clock>
          <span>23:21  21 جنوری</span>
          <Dot />
        </Clock>
        <TrayGroup>
          <TraySlot $w={38}>
            <svg width="18" height="20" viewBox="0 0 18 20">
              <path d="M3 2c4-1 9-1 12 1 2 6 1 12-4 15-3 1-6 0-7-3-2-4-2-9-1-13z" fill="#5ea913" />
              <path d="M6 10l2 2 4-4" fill="none" stroke="#fff" strokeWidth="1.800" />
            </svg>
          </TraySlot>
          <Spacer $w={11} />
          <TraySlot $w={32}>
            <svg width="18" height="16" viewBox="0 0 18 16">
              <path d="M1 4c5-4 11-4 16 0L9 15z" fill="#f0f0f0" />
              <path d="M4 3.500c3-2 7-2 10 0" stroke="#1b1b1b" fill="none" />
            </svg>
          </TraySlot>
          <TraySlot $w={24}>
            <svg width="18" height="16" viewBox="0 0 18 16">
              <path d="M1 5h3l5-4v14l-5-4H1z" fill="#ececec" />
              <path d="M11 5c1 2 1 4 0 6M14 3c2 3 2 7 0 10" stroke="#ececec" fill="none" />
            </svg>
          </TraySlot>
          <TraySlot $w={32}>
            <svg width="14" height="20" viewBox="0 0 14 20">
              <rect x="4" y="1" width="6" height="11" rx="3" fill="#efefef" />
              <path d="M2 8c0 7 10 7 10 0M7 13v5M4 18.500h6" stroke="#efefef" fill="none" />
            </svg>
          </TraySlot>
          <TraySlot $w={22}>
            <svg width="12" height="20" viewBox="0 0 12 20">
              <rect x="1.500" y="3" width="9" height="15" rx="1" fill="none" stroke="#eee" />
              <rect x="4" y="1" width="4" height="2" fill="#eee" />
              <rect x="3" y="9" width="6" height="8" fill="#eee" />
            </svg>
          </TraySlot>
          <TraySlot $w={26}>
            <DownCaret $size={5} />
          </TraySlot>
          <Spacer $w={7} />
        </TrayGroup>
      </TopBar>

      <Body>
        <Dock>
          <Backdrop />
          {DockApps.map((app, n) => (
            <DockItem key={n}>
              {app.active && <DockActive />}
              {app.dot && <RunDot />}
              <DockIcon width={app.s} height={app.s} viewBox={`0 0 ${app.s} ${app.s}`}>
                {app.art}
              </DockIcon>
            </DockItem>
          ))}
          <AppsGrid>
            {Array.from({ length: 9 }).map((_, n) => (
              <AppsDot key={n} />
            ))}
          </AppsGrid>
        </Dock>

        <Win>
          <TitleBar>
            Untitled 1.odt - LibreOffice Writer
            <WinControls>
              <WinButton $w={33}>
                <svg width="10" height="10" viewBox="0 0 10 10">
                  <path d="M1 8.500h8" stroke="#eee" strokeWidth="1.200" />
                </svg>
              </WinButton>
              <WinButton $w={34}>
                <svg width="10" height="10" viewBox="0 0 10 10">
                  <rect x="1" y="3" width="6" height="6" fill="none" stroke="#eee" />
                  <path d="M3.500 1h5.500v5.500" fill="none" stroke="#999" />
                </svg>
              </WinButton>
              <WinButton $w={36}>
                <CloseDisc>
                  <svg width="10" height="10" viewBox="0 0 10 10">
                    <path d="M1 1l8 8M9 1l-8 8" stroke="#fff" strokeWidth="1.300" />
                  </svg>
                </CloseDisc>
              </WinButton>
            </WinControls>
          </TitleBar>

          <MenuBar>
            {Menus.map((m) => (
              <MenuItem key={m}>{m}</MenuItem>
            ))}
            <DocClose>
              <svg width="10" height="10" viewBox="0 0 10 10">
                <path d="M1 1l8 8M9 1l-8 8" stroke="#eee" strokeWidth="1.200" />
              </svg>
            </DocClose>
          </MenuBar>

          <ToolRow $h={38} $top={2}>
            <Grip />
            {renderTools(ToolbarOne)}
          </ToolRow>

          <ToolRow $h={42}>
            <Grip $mr={5} />
            <Combo $w={144}>
              <ComboText>Default Style</ComboText>
              <ComboArrow>
                <DownCaret $size={5} />
              </ComboArrow>
            </Combo>
            <Tool $w={34}>{Icons.updateStyle}</Tool>
            <Tool $w={34}>{Icons.newStyle}</Tool>
            <Sep $w={6} />
            <Combo $w={144}>
              <ComboText>Liberation Se</ComboText>
              <ComboArrow>
                <DownCaret $size={5} />
              </ComboArrow>
            </Combo>
            <Spacer $w={8} />
            <Combo $w={85}>
              <ComboText>18</ComboText>
              <ComboArrow>
                <DownCaret $size={5} />
              </ComboArrow>
            </Combo>
            <Sep $w={8} />
            {renderTools(ToolbarTwoEnd)}
          </ToolRow>

          <Main>
            <Workspace>
              <RulerCorner />
              <Ruler />
              <Page>
                <MarginMark />
                <MarginMark $right />
                <div>04170103239325</div>
                <div>MEZNPKKA</div>
              </Page>
            </Workspace>
            <ScrollTrack>
              <ScrollThumb />
            </ScrollTrack>
            <SidebarSash>
              <SashHandle>
                <svg width="5" height="8" viewBox="0 0 5 8">
                  <path d="M0 0l4 4-4 4z" fill="#ddd" />
                </svg>
              </SashHandle>
            </SidebarSash>
            <Sidebar>
              <SideTool $h={34}>
                <svg width="24" height="24" viewBox="0 0 24 24">
                  <circle cx="12" cy="12" r="6.500" fill="none" stroke="#d8d8d8" strokeWidth="5" />
                  <path d="M12 1v4M12 19v4M1 12h4M19 12h4M4 4l3 3M17 17l3 3M20 4l-3 3M7 17l-3 3" stroke="#d8d8d8" strokeWidth="3.400" />
                </svg>
              </SideTool>
              <SideDivider />
              <SideTool $active $h={32}>
                <svg width="22" height="22" viewBox="0 0 22 22">
                  <rect x="1" y="1" width="20" height="20" fill="#e8e8e8" />
                  <rect x="3" y="7" width="16" height="8" rx="4" fill="#3d8be8" />
                  <circle cx="15" cy="11" r="3" fill="#fff" />
                </svg>
              </SideTool>
              <SideTool>
                <svg width="18" height="22" viewBox="0 0 18 22">
                  <rect x="0.500" y="0.500" width="17" height="21" fill="#ededed" stroke="#888" />
                </svg>
              </SideTool>
              <SideTool>
                <svg width="24" height="24" viewBox="0 0 24 24" style={{ overflow: "visible" }}>
                  <Letter x={9} y={17} size={21} />
                  <path d="M22 8L13 18" stroke="#b56a24" strokeWidth="2.500" />
                  <path d="M13 17l3 3-4 3H7z" fill="#d84aa8" />
                </svg>
              </SideTool>
              <SideTool>
                <svg width="24" height="22" viewBox="0 0 24 22">
                  <path d="M4 1l16 2v3H3z" fill="#cfe0ef" />
                  <rect x="2" y="5" width="21" height="16" fill="#fff" />
                  <rect x="4" y="7" width="17" height="6" fill="#53aee0" />
                  <rect x="4" y="13" width="17" height="6" fill="#f0b040" />
                  <circle cx="9" cy="15" r="2" fill="#d84a20" />
                </svg>
              </SideTool>
              <SideTool>
                <svg width="24" height="24" viewBox="0 0 24 24">
                  <circle cx="12" cy="12" r="10" fill="#3c4860" stroke="#9a9a9a" strokeWidth="2" />
                  <path d="M19 5l-5 9-4-4z" fill="#d8232a" />
                  <path d="M5 19l5-9 4 4z" fill="#e8e8e8" />
                </svg>
              </SideTool>
            </Sidebar>
          </Main>

          <ToolRow $h={39}>
            <Grip $mr={7} />
            <Tool $w={30}>
              <svg width="22" height="22" viewBox="0 0 22 22">
                <circle cx="11" cy="11" r="10" fill="#d9303a" stroke="#a51f28" />
                <path d="M7 7l8 8M15 7l-8 8" stroke="#fff" strokeWidth="2.600" />
              </svg>
            </Tool>
            <Spacer $w={1} />
            <Combo $w={249}>
              <ComboText $color="#7c7c7c">Find</ComboText>
              <ComboArrow $w={33}>
                <DownCaret $size={5} />
              </ComboArrow>
            </Combo>
            <Tool $w={38}>{Icons.up("#b5b5b5")}</Tool>
            <Tool $w={26}>{Icons.down("#b5b5b5")}</Tool>
            <FindLabel $w={52}>Find All</FindLabel>
            <CheckBox />
            <MatchCase>Match Case</MatchCase>
            <Sep $w={1} />
            <Tool $w={45}>{Icons.spell}</Tool>
            <Combo $w={149}>
              <ComboText>
                <svg width="10" height="16" viewBox="0 0 10 16">
                  <rect width="10" height="16" fill="#ececec" />
                </svg>
                Page
              </ComboText>
              <ComboArrow $w={34} $flat>
                <DownCaret $size={5} />
              </ComboArrow>
            </Combo>
            <Tool $w={34}>{Icons.up("#6c6c6c")}</Tool>
            <Tool $w={32}>{Icons.down("#6c6c6c")}</Tool>
            <Sep $w={8} />
          </ToolRow>

          <StatusBar>
            <StatusCell $w={263} $pad={9} $plain>
              Page 1 of 1
            </StatusCell>
            <StatusCell $w={388}>2 words, 22 characters</StatusCell>
            <StatusCell $w={377}>Default Style</StatusCell>
            <StatusCell $w={183} $pad={8} $plain>
              English (USA)
            </StatusCell>
            <StatusCell $w={68} />
            <StatusCell $w={29} $center>
              <svg width="16" height="14" viewBox="0 0 16 14">
                <path d="M1 1h4M3 1v12M1 13h4M9 12v1h5v-1" stroke="#9a9a9a" fill="none" />
              </svg>
            </StatusCell>
            <StatusCell $w={30} $center>
              <svg width="12" height="13" viewBox="0 0 12 13">
                <rect width="12" height="13" fill="#f0f0f0" />
                <path d="M4 2h4v4h3l-5 6-5-6h3z" fill="#e8831c" />
              </svg>
            </StatusCell>
            <StatusCell $w={29} />
            <StatusCell $w={217} />
            <StatusCell $w={76} $pad={10}>
              <svg width="66" height="16" viewBox="0 0 66 16">
                <path d="M2.500 1.500h4l3 3v10h-7z" fill="none" stroke="#d8651c" />
                <path d="M19.500 1.500h5l2 3v10h-7zM29.500 1.500h5l2 3v10h-7z" fill="none" stroke="#8a8a8a" />
                <path d="M44 1.500c-4 0-5 3-5 6s1 7 5 7h10c4 0 5-4 5-7s-1-6-5-6zM49 1.500v13" fill="none" stroke="#8a8a8a" />
              </svg>
            </StatusCell>
            <StatusCell $w={144} $pad={11}>
              <svg width="10" height="10" viewBox="0 0 10 10">
                <path d="M1 5h8" stroke="#9a9a9a" />
              </svg>
              <ZoomTrack>
                <ZoomMark />
                <ZoomThumb />
              </ZoomTrack>
              <svg width="12" height="12" viewBox="0 0 12 12">
                <path d="M0 6h12M6 0v12" stroke="#9a9a9a" />
              </svg>
            </StatusCell>
            <StatusCell $w={48} $pad={8}>
              100%
            </StatusCell>
          </StatusBar>
        </Win>
      </Body>
    </Desktop>
  );
}
